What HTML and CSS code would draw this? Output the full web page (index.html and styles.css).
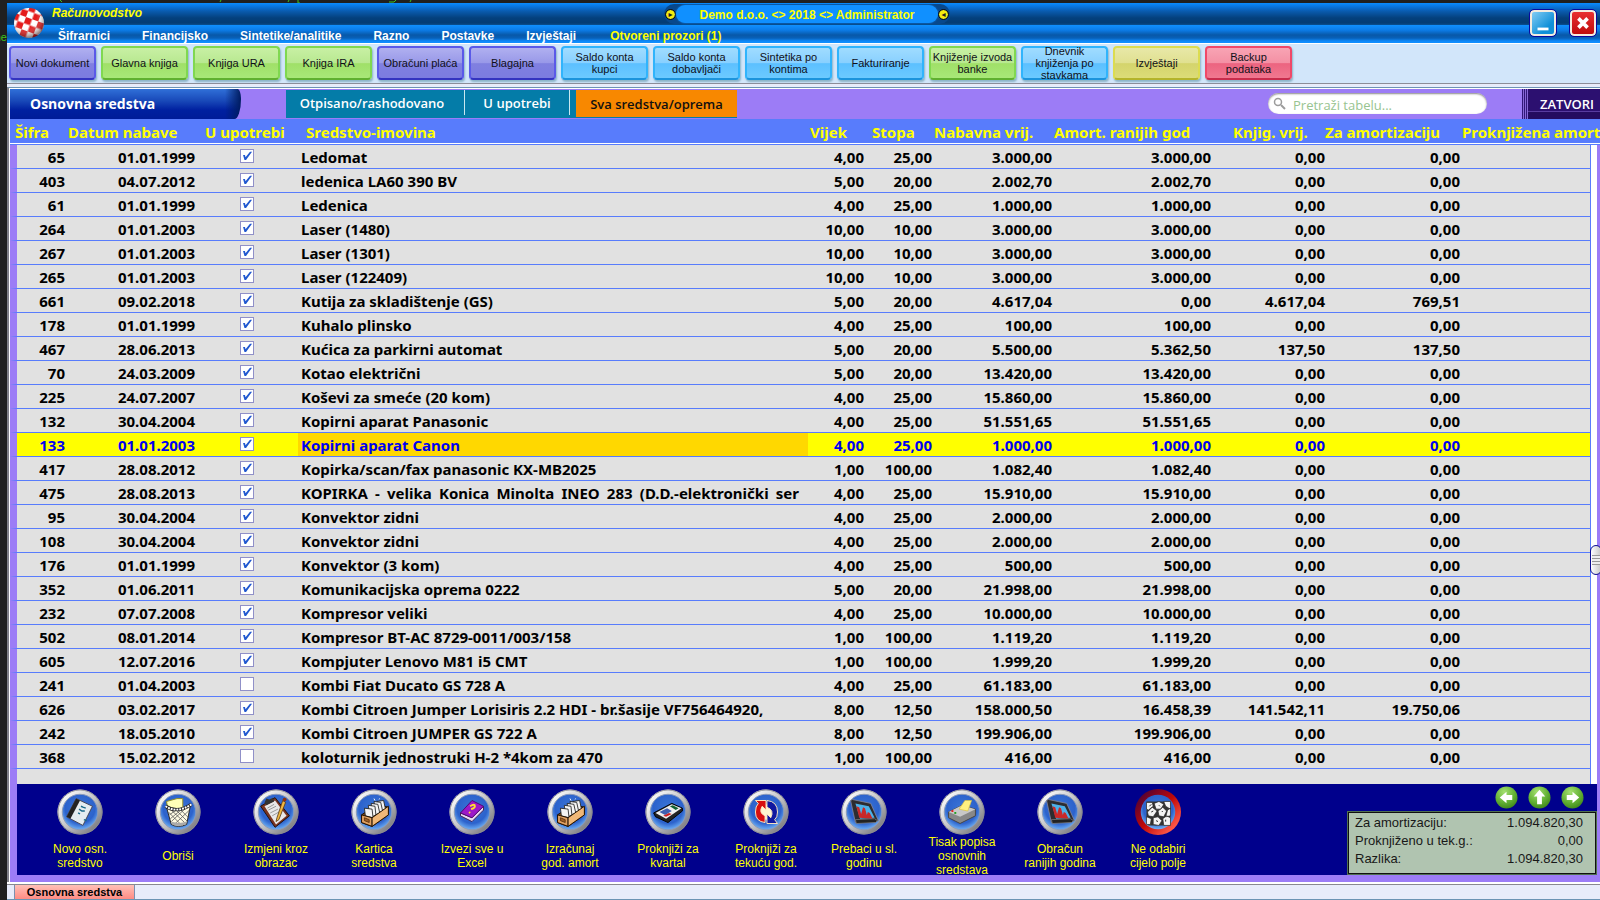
FILE: index.html
```html
<!DOCTYPE html>
<html lang="hr">
<head>
<meta charset="utf-8">
<title>Računovodstvo</title>
<link rel="stylesheet" href="styles.css">
</head>
<body>
<svg class="defs" aria-hidden="true">
  <defs>
    <linearGradient id="rim" x1="0" y1="0" x2="1" y2="1"><stop offset="0.1" stop-color="#fff"/><stop offset="0.5" stop-color="#c4c4c8"/><stop offset="0.9" stop-color="#77777c"/></linearGradient>
    <linearGradient id="rimred" x1="0" y1="0" x2="1" y2="1"><stop offset="0" stop-color="#300040"/><stop offset="0.5" stop-color="#c00808"/><stop offset="0.85" stop-color="#ff5a48"/></linearGradient>
    <radialGradient id="blue" cx="0.5" cy="0.4" r="0.6"><stop offset="0" stop-color="#3a76d8"/><stop offset="0.7" stop-color="#2c62cc"/><stop offset="1" stop-color="#6fb0f4"/></radialGradient>
    <radialGradient id="green" cx="0.4" cy="0.25" r="0.8"><stop offset="0" stop-color="#a4e070"/><stop offset="0.6" stop-color="#62b034"/><stop offset="1" stop-color="#3c8418"/></radialGradient>
    <radialGradient id="shade" cx="0.4" cy="0.3" r="0.7"><stop offset="0.5" stop-color="#fff" stop-opacity="0"/><stop offset="1" stop-color="#200" stop-opacity="0.55"/></radialGradient>
    <pattern id="checks" width="13" height="13" patternUnits="userSpaceOnUse" patternTransform="translate(13 10) rotate(20)"><rect width="13" height="13" fill="#fff"/><path d="M0 0h6.500v6.500H0zM6.500 6.500H13V13H6.500z" fill="#e41c1c"/></pattern>
    <symbol id="disc" viewBox="0 0 48 48"><circle cx="24" cy="24" r="23.500" fill="url(#rim)"/><circle cx="24" cy="24" r="23" fill="none" stroke="#8a8a90"/><circle cx="24" cy="24" r="18.500" fill="url(#blue)" stroke="#8a9ab8"/></symbol>
    <symbol id="box" viewBox="0 0 48 48"><path d="M11 27l16-11 12 3v8L22 39l-11-4z" fill="#7a4a1c" stroke="#201000"/><g fill="#f4f4f4" stroke="#222" stroke-width=".9"><path d="M27 13l7-1 2 9-7 3z"/><path d="M24 13l7 1 2 9-7 3z"/><path d="M21 15l7 1 2 9-7 3z"/><path d="M18 17l7 1 1 9-6 3z"/><path d="M14 20l8 1 1 9-8-2z"/></g><path d="M25 12l-1-2M29 11l1-1" stroke="#fff"/><path d="M11 27l11 3v9l-11-4z" fill="#e0a060" stroke="#201000"/><path d="M22 30l17-12v9L22 39z" fill="#f0b878" stroke="#201000"/><path d="M14 30l5 2v3l-5-2z" fill="#a06028" stroke="#402000" stroke-width=".7"/></symbol>
    <symbol id="chart" viewBox="0 0 48 48"><path d="M10 12l2-1 19 4 8 18-3 1-21 1z" fill="#2c2c30" stroke="#889" stroke-width=".8"/><path d="M15 15l14 3 6 12-15 1z" fill="#4cb0e8"/><path d="M19 30l-3-12 3 1 2 7 2-7 2 1 2 7 1-3 2 1 3 6z" fill="#c82828"/><path d="M15 32l20-1 3 2-2 2-20 1z" fill="#222" stroke="#888" stroke-width=".7"/></symbol>
  </defs>
</svg>
<div class="terminal" aria-hidden="true">
  <svg class="traces" width="420" height="3" viewBox="0 0 420 3"><path d="M60 0l2 2M221 0l-1 2M289 0l-1 2M298 0v3h2M389 2h5l2-2M411 0l-1 2" stroke="#3fc51c" fill="none"/></svg>
  <span class="trace-text">ne</span>
</div>
<div class="window">
  <header class="titlebar">
    <svg class="logo" viewBox="0 0 32 32" role="img" aria-label="Logo"><circle cx="16" cy="16" r="15" fill="url(#checks)"/><circle cx="16" cy="16" r="15" fill="url(#shade)"/></svg>
    <div class="heading">
      <div class="title-row"><h1 class="app-title">Računovodstvo</h1></div>
      <nav class="menu">
        <a href="#">Šifrarnici</a><a href="#">Financijsko</a><a href="#">Sintetike/analitike</a><a href="#">Razno</a><a href="#">Postavke</a><a href="#">Izvještaji</a><a href="#" class="open">Otvoreni prozori (1)</a>
      </nav>
    </div>
    <div class="session"><i class="dot">▸</i><span>Demo d.o.o. &lt;&gt; 2018 &lt;&gt; Administrator</span><i class="dot">◂</i></div>
    <div class="controls">
      <button class="win min" aria-label="Minimiziraj"><svg viewBox="0 0 24 24"><path d="M6 18.500h12" stroke="#fff" stroke-width="3"/></svg></button>
      <button class="win close" aria-label="Zatvori prozor"><svg viewBox="0 0 24 24"><path d="M7 7l10 10M17 7L7 17" stroke="#fff" stroke-width="4"/></svg></button>
    </div>
  </header>
  <div class="toolbar">
    <button class="tool violet">Novi dokument</button>
    <button class="tool green">Glavna knjiga</button>
    <button class="tool green">Knjiga URA</button>
    <button class="tool green">Knjiga IRA</button>
    <button class="tool violet">Obračuni plaća</button>
    <button class="tool violet">Blagajna</button>
    <button class="tool sky">Saldo konta<br>kupci</button>
    <button class="tool sky">Saldo konta<br>dobavljači</button>
    <button class="tool sky">Sintetika po<br>kontima</button>
    <button class="tool sky">Fakturiranje</button>
    <button class="tool green">Knjiženje izvoda<br>banke</button>
    <button class="tool sky">Dnevnik<br>knjiženja po<br>stavkama</button>
    <button class="tool olive">Izvještaji</button>
    <button class="tool red">Backup<br>podataka</button>
  </div>
  <main class="panel">
    <div class="panel-head">
      <h2 class="panel-title">Osnovna sredstva</h2>
      <div class="tabs">
        <button class="tab">Otpisano/rashodovano</button><button class="tab second">U upotrebi</button><button class="tab active">Sva sredstva/oprema</button>
      </div>
      <label class="search"><svg viewBox="0 0 14 14" width="14" height="14"><circle cx="5" cy="5" r="3.500" fill="none" stroke="#9c9c9c" stroke-width="1.500"/><path d="M8 8l4 4" stroke="#9c9c9c" stroke-width="2"/></svg><input type="text" aria-label="Pretraži tabelu" placeholder="Pretraži tabelu..."></label>
      <button class="exit">ZATVORI</button>
    </div>
    <div class="grid">
      <div class="gutter"><div class="thumb"></div></div>
      <table>
        <colgroup><col class="c-id"><col class="c-date"><col class="c-use"><col class="c-name"><col class="c-life"><col class="c-rate"><col class="c-buy"><col class="c-prev"><col class="c-book"><col class="c-dep"><col></colgroup>
        <thead><tr><th>Šifra</th><th>Datum nabave</th><th>U upotrebi</th><th>Sredstvo-imovina</th><th>Vijek</th><th>Stopa</th><th>Nabavna vrij.</th><th>Amort. ranijih god</th><th>Knjig. vrij.</th><th>Za amortizaciju</th><th>Proknjižena amort</th></tr></thead>
        <tbody>
<tr><td>65</td><td>01.01.1999</td><td><input type="checkbox" aria-label="U upotrebi" checked></td><td>Ledomat</td><td>4,00</td><td>25,00</td><td>3.000,00</td><td>3.000,00</td><td>0,00</td><td>0,00</td><td></td></tr>
<tr><td>403</td><td>04.07.2012</td><td><input type="checkbox" aria-label="U upotrebi" checked></td><td>ledenica LA60 390 BV</td><td>5,00</td><td>20,00</td><td>2.002,70</td><td>2.002,70</td><td>0,00</td><td>0,00</td><td></td></tr>
<tr><td>61</td><td>01.01.1999</td><td><input type="checkbox" aria-label="U upotrebi" checked></td><td>Ledenica</td><td>4,00</td><td>25,00</td><td>1.000,00</td><td>1.000,00</td><td>0,00</td><td>0,00</td><td></td></tr>
<tr><td>264</td><td>01.01.2003</td><td><input type="checkbox" aria-label="U upotrebi" checked></td><td>Laser (1480)</td><td>10,00</td><td>10,00</td><td>3.000,00</td><td>3.000,00</td><td>0,00</td><td>0,00</td><td></td></tr>
<tr><td>267</td><td>01.01.2003</td><td><input type="checkbox" aria-label="U upotrebi" checked></td><td>Laser (1301)</td><td>10,00</td><td>10,00</td><td>3.000,00</td><td>3.000,00</td><td>0,00</td><td>0,00</td><td></td></tr>
<tr><td>265</td><td>01.01.2003</td><td><input type="checkbox" aria-label="U upotrebi" checked></td><td>Laser (122409)</td><td>10,00</td><td>10,00</td><td>3.000,00</td><td>3.000,00</td><td>0,00</td><td>0,00</td><td></td></tr>
<tr><td>661</td><td>09.02.2018</td><td><input type="checkbox" aria-label="U upotrebi" checked></td><td>Kutija za skladištenje (GS)</td><td>5,00</td><td>20,00</td><td>4.617,04</td><td>0,00</td><td>4.617,04</td><td>769,51</td><td></td></tr>
<tr><td>178</td><td>01.01.1999</td><td><input type="checkbox" aria-label="U upotrebi" checked></td><td>Kuhalo plinsko</td><td>4,00</td><td>25,00</td><td>100,00</td><td>100,00</td><td>0,00</td><td>0,00</td><td></td></tr>
<tr><td>467</td><td>28.06.2013</td><td><input type="checkbox" aria-label="U upotrebi" checked></td><td>Kućica za parkirni automat</td><td>5,00</td><td>20,00</td><td>5.500,00</td><td>5.362,50</td><td>137,50</td><td>137,50</td><td></td></tr>
<tr><td>70</td><td>24.03.2009</td><td><input type="checkbox" aria-label="U upotrebi" checked></td><td>Kotao električni</td><td>5,00</td><td>20,00</td><td>13.420,00</td><td>13.420,00</td><td>0,00</td><td>0,00</td><td></td></tr>
<tr><td>225</td><td>24.07.2007</td><td><input type="checkbox" aria-label="U upotrebi" checked></td><td>Koševi za smeće (20 kom)</td><td>4,00</td><td>25,00</td><td>15.860,00</td><td>15.860,00</td><td>0,00</td><td>0,00</td><td></td></tr>
<tr><td>132</td><td>30.04.2004</td><td><input type="checkbox" aria-label="U upotrebi" checked></td><td>Kopirni aparat Panasonic</td><td>4,00</td><td>25,00</td><td>51.551,65</td><td>51.551,65</td><td>0,00</td><td>0,00</td><td></td></tr>
<tr class="selected"><td>133</td><td>01.01.2003</td><td><input type="checkbox" aria-label="U upotrebi" checked></td><td>Kopirni aparat Canon</td><td>4,00</td><td>25,00</td><td>1.000,00</td><td>1.000,00</td><td>0,00</td><td>0,00</td><td></td></tr>
<tr><td>417</td><td>28.08.2012</td><td><input type="checkbox" aria-label="U upotrebi" checked></td><td>Kopirka/scan/fax panasonic KX-MB2025</td><td>1,00</td><td>100,00</td><td>1.082,40</td><td>1.082,40</td><td>0,00</td><td>0,00</td><td></td></tr>
<tr><td>475</td><td>28.08.2013</td><td><input type="checkbox" aria-label="U upotrebi" checked></td><td class="justified">KOPIRKA - velika Konica Minolta INEO 283 (D.D.-elektronički ser</td><td>4,00</td><td>25,00</td><td>15.910,00</td><td>15.910,00</td><td>0,00</td><td>0,00</td><td></td></tr>
<tr><td>95</td><td>30.04.2004</td><td><input type="checkbox" aria-label="U upotrebi" checked></td><td>Konvektor zidni</td><td>4,00</td><td>25,00</td><td>2.000,00</td><td>2.000,00</td><td>0,00</td><td>0,00</td><td></td></tr>
<tr><td>108</td><td>30.04.2004</td><td><input type="checkbox" aria-label="U upotrebi" checked></td><td>Konvektor zidni</td><td>4,00</td><td>25,00</td><td>2.000,00</td><td>2.000,00</td><td>0,00</td><td>0,00</td><td></td></tr>
<tr><td>176</td><td>01.01.1999</td><td><input type="checkbox" aria-label="U upotrebi" checked></td><td>Konvektor (3 kom)</td><td>4,00</td><td>25,00</td><td>500,00</td><td>500,00</td><td>0,00</td><td>0,00</td><td></td></tr>
<tr><td>352</td><td>01.06.2011</td><td><input type="checkbox" aria-label="U upotrebi" checked></td><td>Komunikacijska oprema 0222</td><td>5,00</td><td>20,00</td><td>21.998,00</td><td>21.998,00</td><td>0,00</td><td>0,00</td><td></td></tr>
<tr><td>232</td><td>07.07.2008</td><td><input type="checkbox" aria-label="U upotrebi" checked></td><td>Kompresor veliki</td><td>4,00</td><td>25,00</td><td>10.000,00</td><td>10.000,00</td><td>0,00</td><td>0,00</td><td></td></tr>
<tr><td>502</td><td>08.01.2014</td><td><input type="checkbox" aria-label="U upotrebi" checked></td><td>Kompresor BT-AC 8729-0011/003/158</td><td>1,00</td><td>100,00</td><td>1.119,20</td><td>1.119,20</td><td>0,00</td><td>0,00</td><td></td></tr>
<tr><td>605</td><td>12.07.2016</td><td><input type="checkbox" aria-label="U upotrebi" checked></td><td>Kompjuter Lenovo M81 i5 CMT</td><td>1,00</td><td>100,00</td><td>1.999,20</td><td>1.999,20</td><td>0,00</td><td>0,00</td><td></td></tr>
<tr><td>241</td><td>01.04.2003</td><td><input type="checkbox" aria-label="U upotrebi"></td><td>Kombi Fiat Ducato GS 728 A</td><td>4,00</td><td>25,00</td><td>61.183,00</td><td>61.183,00</td><td>0,00</td><td>0,00</td><td></td></tr>
<tr><td>626</td><td>03.02.2017</td><td><input type="checkbox" aria-label="U upotrebi" checked></td><td>Kombi Citroen Jumper Lorisiris 2.2 HDI - br.šasije VF756464920,</td><td>8,00</td><td>12,50</td><td>158.000,50</td><td>16.458,39</td><td>141.542,11</td><td>19.750,06</td><td></td></tr>
<tr><td>242</td><td>18.05.2010</td><td><input type="checkbox" aria-label="U upotrebi" checked></td><td>Kombi Citroen JUMPER GS 722 A</td><td>8,00</td><td>12,50</td><td>199.906,00</td><td>199.906,00</td><td>0,00</td><td>0,00</td><td></td></tr>
<tr><td>368</td><td>15.02.2012</td><td><input type="checkbox" aria-label="U upotrebi"></td><td>koloturnik jednostruki H-2 *4kom za 470</td><td>1,00</td><td>100,00</td><td>416,00</td><td>416,00</td><td>0,00</td><td>0,00</td><td></td></tr>
        </tbody>
      </table>
    </div>
    <div class="actions">
      <button class="action"><svg viewBox="0 0 48 48"><use href="#disc"/><path d="M20 10l17 8-10 20-17-9z" fill="#e4ecf0" stroke="#445"/><path d="M20 10l4 2-10 19-4-2z" fill="#222"/><path d="M25 18l2 1 3 1m-7 1l3 2 3 0m-7 2l2 1m4 6l3 1" stroke="#186888" stroke-width="1.500" fill="none"/></svg><span>Novo osn.<br>sredstvo</span></button>
      <button class="action"><svg viewBox="0 0 48 48"><use href="#disc"/><path d="M12 13l11-3 6 0v14H14z" fill="#ffffb8" stroke="#908a20"/><path d="M12 19q12 8 25-2l-4 20q-9 4-16 0z" fill="#fffbe4" stroke="#222"/><path d="M14 24l15 15M17 22l16 15M22 22l12 12M27 22l8 8M36 22L19 38M32 20L17 34M27 22L16 31M22 22l-7 5" stroke="#555" stroke-width=".8"/><path d="M18 37q7 3 14 0l1-3q-8 3-16 0z" fill="#aaa"/><path d="M11 18q12 8 27-2" fill="none" stroke="#222" stroke-width="3.500"/><path d="M11 18q12 8 27-2" fill="none" stroke="#fff" stroke-width="2" stroke-dasharray="2 1"/></svg><span>Obriši</span></button>
      <button class="action"><svg viewBox="0 0 48 48"><use href="#disc"/><path d="M8 18l15-9 15 19-15 12z" fill="#7a3420" stroke="#201008"/><path d="M12 18l11-6 12 16-11 9z" fill="#e8e8e8"/><path d="M15 20l7-4m-6 6l8-4m-6 7l8-4m-6 7l7-4" stroke="#999"/><path d="M12 14l2-4 3 1 4-2 1 4-8 4z" fill="#333"/><path d="M31 12l-6 18-1 4 3-2 7-18z" fill="#f0b840" stroke="#503010" stroke-width=".8"/><circle cx="33" cy="11" r="2" fill="#8a3010"/></svg><span>Izmjeni kroz<br>obrazac</span></button>
      <button class="action"><svg viewBox="0 0 48 48"><use href="#disc"/><use href="#box"/></svg><span>Kartica<br>sredstva</span></button>
      <button class="action"><svg viewBox="0 0 48 48"><use href="#disc"/><path d="M12 25l12 5 12-12v4L24 34l-12-6z" fill="#e8d8f0" stroke="#402050"/><path d="M12 25l12-13 12 6-12 12z" fill="#9c18c8" stroke="#500870"/><path d="M22 18q5-3 5 0 0 2-4 3m-2 3l1 1" stroke="#ffe030" stroke-width="2" fill="none"/></svg><span>Izvezi sve u<br>Excel</span></button>
      <button class="action"><svg viewBox="0 0 48 48"><use href="#disc"/><use href="#box"/></svg><span>Izračunaj<br>god. amort</span></button>
      <button class="action"><svg viewBox="0 0 48 48"><use href="#disc"/><path d="M9 25l19-10 11 5v3L24 35l-13-6z" fill="#222" stroke="#000"/><path d="M11 25l17-9 10 4-16 11z" fill="#f0f0f0"/><path d="M26 18l3-1 6 3-3 2z" fill="#106030"/><path d="M15 24l8-4 5 3-7 4z" fill="#4060b0"/><path d="M19 28l6-3 3 1-6 3z" fill="#d02020"/></svg><span>Proknjiži za<br>kvartal</span></button>
      <button class="action"><svg viewBox="0 0 48 48"><use href="#disc"/><circle cx="24" cy="24" r="8" fill="#fff8d0"/><path d="M23 35q-10-1-10-11 0-6 3-9l-3-3h11v10l-4-4q-4 7 3 10z" fill="#d81010" stroke="#ffe8c0"/><path d="M25 12q11 1 11 12 0 6-3 8l3 4H25V26l4 4q4-8-4-11z" fill="#1018a0" stroke="#ffe8c0"/></svg><span>Proknjiži za<br>tekuću god.</span></button>
      <button class="action"><svg viewBox="0 0 48 48"><use href="#disc"/><use href="#chart"/></svg><span>Prebaci u sl.<br>godinu</span></button>
      <button class="action"><svg viewBox="0 0 48 48"><use href="#disc"/><path d="M10 24l14-7 14 4v7l-16 8-12-6z" fill="#888" stroke="#444"/><path d="M10 24l14-7 14 4-16 8z" fill="#c8c8c8"/><path d="M21 21l6-9 7 0-4 11z" fill="#fff080" stroke="#d8c040" stroke-width=".7"/><path d="M13 23h2" stroke="#e02020" stroke-width="2"/><path d="M16 25h2" stroke="#20a020" stroke-width="2"/></svg><span>Tisak popisa<br>osnovnih<br>sredstava</span></button>
      <button class="action"><svg viewBox="0 0 48 48"><use href="#disc"/><use href="#chart"/></svg><span>Obračun<br>ranijih godina</span></button>
      <button class="action"><svg viewBox="0 0 48 48"><circle cx="24" cy="24" r="24" fill="url(#rimred)"/><circle cx="24" cy="24" r="18" fill="url(#blue)"/><path d="M12 13h25v25H14l-2-3z" fill="#333"/><g fill="#f4f4f4" stroke="#222" stroke-width=".7"><path d="M12 14h6l1 4-5 4-2-1zM20 15l5-2 5 3-3 5-5 0zM30 13h7v8l-5-3zM13 24l5-5 5 4-4 6-5-1zM24 23l5-4 4 4-3 6-5-1zM34 22l3-2v8l-5 1zM12 29l5 2-1 6h-4zM19 30l5-1 4 4-3 5-6-1zM29 31l4-3 4 2v8h-7z"/></g><path d="M15 18l2-2m8 1l1 1m-9 6l2-1m9 0l1 1m-7 9l2 1m8-2v2" stroke="#222"/></svg><span>Ne odabiri<br>cijelo polje</span></button>
      <div class="side">
        <div class="arrows">
          <button aria-label="Prethodni"><svg viewBox="0 0 24 24"><circle cx="12" cy="12" r="11.500" fill="url(#green)"/><path d="M5 12l7-6v3.500h6v5h-6V18z" fill="#fff"/></svg></button>
          <button aria-label="Gore"><svg viewBox="0 0 24 24"><circle cx="12" cy="12" r="11.500" fill="url(#green)"/><path d="M12 4l6 7h-3.500v8h-5v-8H6z" fill="#fff"/></svg></button>
          <button aria-label="Sljedeći"><svg viewBox="0 0 24 24"><circle cx="12" cy="12" r="11.500" fill="url(#green)"/><path d="M19 12l-7-6v3.500H6v5h6V18z" fill="#fff"/></svg></button>
        </div>
        <dl class="totals"><dt>Za amortizaciju:</dt><dd>1.094.820,30</dd><dt>Proknjiženo u tek.g.:</dt><dd>0,00</dd><dt>Razlika:</dt><dd>1.094.820,30</dd></dl>
      </div>
    </div>
  </main>
  <footer class="taskbar"><button class="task">Osnovna sredstva</button></footer>
</div>
</body>
</html>
```
FILE: styles.css
```css
* { box-sizing: border-box; }
body {
  margin: 0;
  min-height: 100vh;
  padding: 3px 0 0 7px;
  display: flex;
  background: #202020;
  overflow: hidden;
  font-family: "Liberation Sans", Arial, sans-serif;
  font-size: 12px;
}
button { font: inherit; margin: 0; padding: 0; border: 0; background: none; }
.defs { position: absolute; width: 0; height: 0; }
.terminal { position: absolute; left: 0; top: 0; width: 7px; height: 100%; color: #3fc51c; }
.traces { position: absolute; left: 0; top: 0; }
.trace-text { position: absolute; right: 0; top: 30px; font: 11px/15px "Liberation Sans", sans-serif; }
.window {
  flex: 1;
  min-width: 0;
  display: flex;
  flex-direction: column;
  background: #e8ecfa;
}

.titlebar {
  position: relative;
  display: flex;
  height: 41px;
  flex: none;
  padding-left: 6px;
  border-bottom: 1px solid #fff;
  background:
    linear-gradient(#0a8cff 0, #0878e4 3px, #0a5cb0 8px, #04407c 15px, #043c74 20px, #0a5090 22px, #1090ff 22px, #0c7ce8 27px, #0858a8 32px, #0860b8 35px, #0e88f8 38px, #1090ff 40px);
}
.logo { width: 32px; height: 32px; margin-top: 4px; }
.heading { flex: 1; padding-left: 7px; }
.title-row { height: 22px; }
.app-title { margin: 0; color: #ff0; font-size: 12px; line-height: 20px; font-style: italic; font-weight: bold; }
.menu { display: flex; gap: 32px; padding-left: 6px; }
.menu a { color: #fff; font-weight: bold; line-height: 22px; text-decoration: none; }
.menu .open { color: #ff0; padding-left: 2px; }
.session {
  position: absolute;
  left: 657px;
  top: 1px;
  width: 286px;
  height: 20px;
  padding: 0 2px;
  display: flex;
  align-items: center;
  justify-content: space-between;
  border-radius: 10px;
  color: #ff0;
  font-weight: bold;
  background: #08488c;
}
.session span {
  width: 262px;
  height: 18px;
  line-height: 20px;
  text-align: center;
  border-radius: 9px;
  background: #1090ff;
  box-shadow: 0 0 2px #1080e8;
}
.dot {
  width: 9px;
  height: 9px;
  flex: none;
  border-radius: 50%;
  background: #f4ec10;
  outline: 1px solid #111;
  color: #222;
  font: 8px/9px "DejaVu Sans", sans-serif;
  text-align: center;
}
.controls { display: flex; gap: 14px; padding: 7px 4px 0 0; }
.win { width: 26px; height: 26px; border: 2px solid #f4ece0; border-radius: 4px; outline: 1px solid #0808a0; }
.win svg { display: block; width: 22px; height: 22px; }
.min { background: linear-gradient(135deg, #80ccf4, #1090d8 70%); }
.close { background: linear-gradient(#e83030, #c00c0c); }

.toolbar {
  display: flex;
  gap: 5px;
  flex: none;
  height: 40px;
  padding: 2px 2px 3px;
  background: #d2e6fa;
  border-bottom: 1px solid #8c8c98;
}
.tool {
  width: 87px;
  height: 34px;
  border: 2px solid;
  border-radius: 4px;
  font-size: 11px;
  line-height: 12px;
  white-space: nowrap;
  color: #101018;
  box-shadow: 1px 2px 2px #8cb4c8;
  display: flex;
  align-items: center;
  justify-content: center;
}
.violet { border-color: #5a5ae8; border-bottom-color: #3434c0; background: linear-gradient(#b0b0f0, #9898e8 50%, #8080e0 52%, #7c7ce0); }
.green { border-color: #80d850; border-bottom-color: #60b030; background: linear-gradient(#c8f0a4, #b8e890 50%, #a0e068 52%, #a8e878); }
.sky { border-color: #30b4fc; border-bottom-color: #1c94dc; background: linear-gradient(#a0dcff, #88d0ff 50%, #5cc0ff 52%, #6ccaff); }
.olive { border-color: #dcdc50; border-bottom-color: #b4b42c; background: linear-gradient(#e8e8a8, #e0e090 50%, #d4d46c 52%, #dcdc78); }
.red { border-color: #f04868; border-bottom-color: #c82c4c; background: linear-gradient(#f8a4b4, #f490a4 50%, #ec6480 52%, #f07890); }

.panel {
  flex: 1;
  display: flex;
  flex-direction: column;
  margin-top: 3px;
  border-top: 1px solid #6c94b4;
  border-left: 2px solid #808088;
  box-shadow: inset 1px 1px #fff;
  padding: 1px 0 0 1px;
  background: #9c7cf6;
}
.panel-head { display: flex; height: 30px; flex: none; }
.panel-title {
  margin: 0 45px 0 0;
  width: 231px;
  padding-left: 20px;
  color: #fff;
  font: bold 14px/30px "Open Sans", sans-serif;
  border-top-right-radius: 4px 12px;
  border-bottom-right-radius: 8px 24px;
  background: linear-gradient(90deg, #0000 215px, #001c60), linear-gradient(#3070d8, #1848b8 40%, #0020a0 70%, #001c98);
}
.tabs { display: flex; height: 28px; margin-top: 1px; background: #047ca8; }
.tab {
  color: #fff;
  font: 600 13px/26px "Open Sans", sans-serif;
  width: 179px;
  padding-right: 6px;
  border-right: 1px solid #c8e8f0;
  margin-bottom: 3px;
}
.tab.second { width: 105px; margin-right: 6px; padding: 0; }
.tab.active { width: 161px; margin: 0 0 1px; padding: 0; border: 0; background: #f88800; color: #101010; }
.search {
  display: flex;
  align-items: center;
  gap: 6px;
  width: 219px;
  height: 21px;
  margin: 4px 35px 0 auto;
  padding: 0 6px 0 5px;
  border-radius: 11px;
  background: #fff;
  box-shadow: inset 0 1px 2px #888;
}
.search input { flex: 1; min-width: 0; border: 0; outline: 0; background: none; padding: 2px 0 0; font: 13px/18px "Open Sans", sans-serif; }
.search input::placeholder { color: #98c490; opacity: 1; }
.exit {
  width: 78px;
  padding-left: 12px;
  color: #fff;
  font: 600 13px/27px "Open Sans", sans-serif;
  background: linear-gradient(90deg, #301878 1px, #8868d8 1px 2px, #301878 2px 3px, #8868d8 3px 4px, #301878 4px 5px, #8868d8 5px 6px, #0000 6px), linear-gradient(#2c1070 22px, #583ca0 22px 23px, #240c60 23px);
}

.grid {
  position: relative;
  flex: 1;
  display: flex;
  flex-direction: row-reverse;
  background: linear-gradient(90deg, #9c7cf6 7px, #e1e1e1 7px);
}
.gutter { width: 10px; flex: none; border-right: 3px solid #9c7cf6; border-left: 1px solid #587cfc; background: #fff; }
.gutter::before { content: ""; display: block; height: 26px; margin: 0 -3px 0 -1px; background: linear-gradient(#587cfc 24px, #fff 24px 25px, #587cfc 25px); }
.thumb {
  position: absolute;
  z-index: 2;
  right: -2px;
  top: 426px;
  width: 12px;
  height: 30px;
  border: 1px solid #0c0c90;
  border-radius: 6px;
  background: repeating-linear-gradient(#999 0 1px, #eee 1px 3px) center / 8px 10px no-repeat, linear-gradient(90deg, #fff, #c8c8c8);
}
table { position: relative; z-index: 1; flex: 1; width: 100%; min-width: 0; height: 0; table-layout: fixed; border-collapse: separate; border-spacing: 0; overflow: visible; font: bold 15px/20px "Noto Sans", "Open Sans", sans-serif; }
.c-id { width: 56px; }
.c-date { width: 137px; }
.c-use { width: 95px; }
.c-name { width: 510px; }
.c-life { width: 56px; }
.c-rate { width: 68px; }
.c-buy { width: 120px; }
.c-prev { width: 159px; }
.c-book { width: 114px; }
.c-dep { width: 135px; }
th {
  height: 26px;
  padding: 1px 0 0 2px;
  text-align: left;
  white-space: nowrap;
  color: #ff0;
  font: bold 15px/25px "Noto Sans", sans-serif;
  background: linear-gradient(#587cfc 24px, #fff 24px 25px, #587cfc 25px);
}
th:first-child { padding-left: 5px; }
th:nth-child(4) { padding-left: 8px; }
th:nth-child(6) { padding-left: 8px; }
th:nth-child(9) { padding-left: 22px; }
th:nth-child(10) { padding-left: 0; }
td { height: 24px; padding: 2px 0 0; border-bottom: 1px solid #587cfc; text-align: right; white-space: nowrap; line-height: 21px; }
td:first-child { border-left: 7px solid #9c7cf6; padding-right: 1px; }
td:nth-child(2) { padding-right: 8px; }
td:nth-child(3) { text-align: left; padding: 0 0 1px 37px; }
td:nth-child(4) { text-align: left; padding-left: 3px; overflow: hidden; }
td.justified { text-align: justify; text-align-last: justify; padding-right: 9px; white-space: normal; }
.selected td { background: #ff0; color: #0000f0; }
.selected td:nth-child(4) { background: #ffd800; }
td input {
  appearance: none;
  display: block;
  width: 14px;
  height: 14px;
  margin: 0;
  border: 1px solid #9090c8;
  background: #fff;
}
td input:checked::before {
  content: "";
  display: block;
  width: 12px;
  height: 12px;
  background: #2058d0;
  clip-path: polygon(17% 42%, 33% 42%, 38% 60%, 75% 15%, 92% 15%, 42% 83%, 29% 83%);
}

.actions {
  display: flex;
  flex: none;
  min-height: 91px;
  margin: 0 3px 7px 7px;
  padding-left: 14px;
  background: #00008c;
}
.action { width: 98px; display: flex; flex-direction: column; align-items: center; padding-top: 5px; color: #ff0; line-height: 14px; }
.action svg { width: 46px; height: 46px; flex: none; }
.action span { flex: 1; display: flex; align-items: center; white-space: nowrap; text-align: center; margin-bottom: -2px; }
.side { margin-left: auto; width: 250px; display: flex; flex-direction: column; }
.arrows { display: flex; justify-content: flex-end; gap: 10px; height: 27px; padding: 2px 13px 0 0; }
.arrows button { width: 23px; height: 23px; }
.arrows svg { display: block; width: 23px; height: 23px; }
.totals {
  flex: 1;
  margin: 0;
  padding: 1px 12px 0 6px;
  display: grid;
  grid-template-columns: 1fr auto;
  align-content: start;
  border: 2px solid #101010;
  outline: 1px solid #507050;
  outline-offset: -1px;
  background: #b0c4b0;
  color: #181818;
  font-size: 13px;
  line-height: 18px;
}
.totals dd { margin: 0; text-align: right; }
.taskbar { flex: none; height: 18px; padding: 0 7px; border-top: 2px solid #fff; border-bottom: 1px solid #6c94b4; box-shadow: inset 0 1px #888890; }
.task { display: block; width: 121px; height: 14px; margin-top: 1px; background: linear-gradient(#ffc0b8, #ff8c84); border: solid #7c90b0; border-width: 0 1px; font-size: 11px; font-weight: bold; line-height: 14px; }
```
